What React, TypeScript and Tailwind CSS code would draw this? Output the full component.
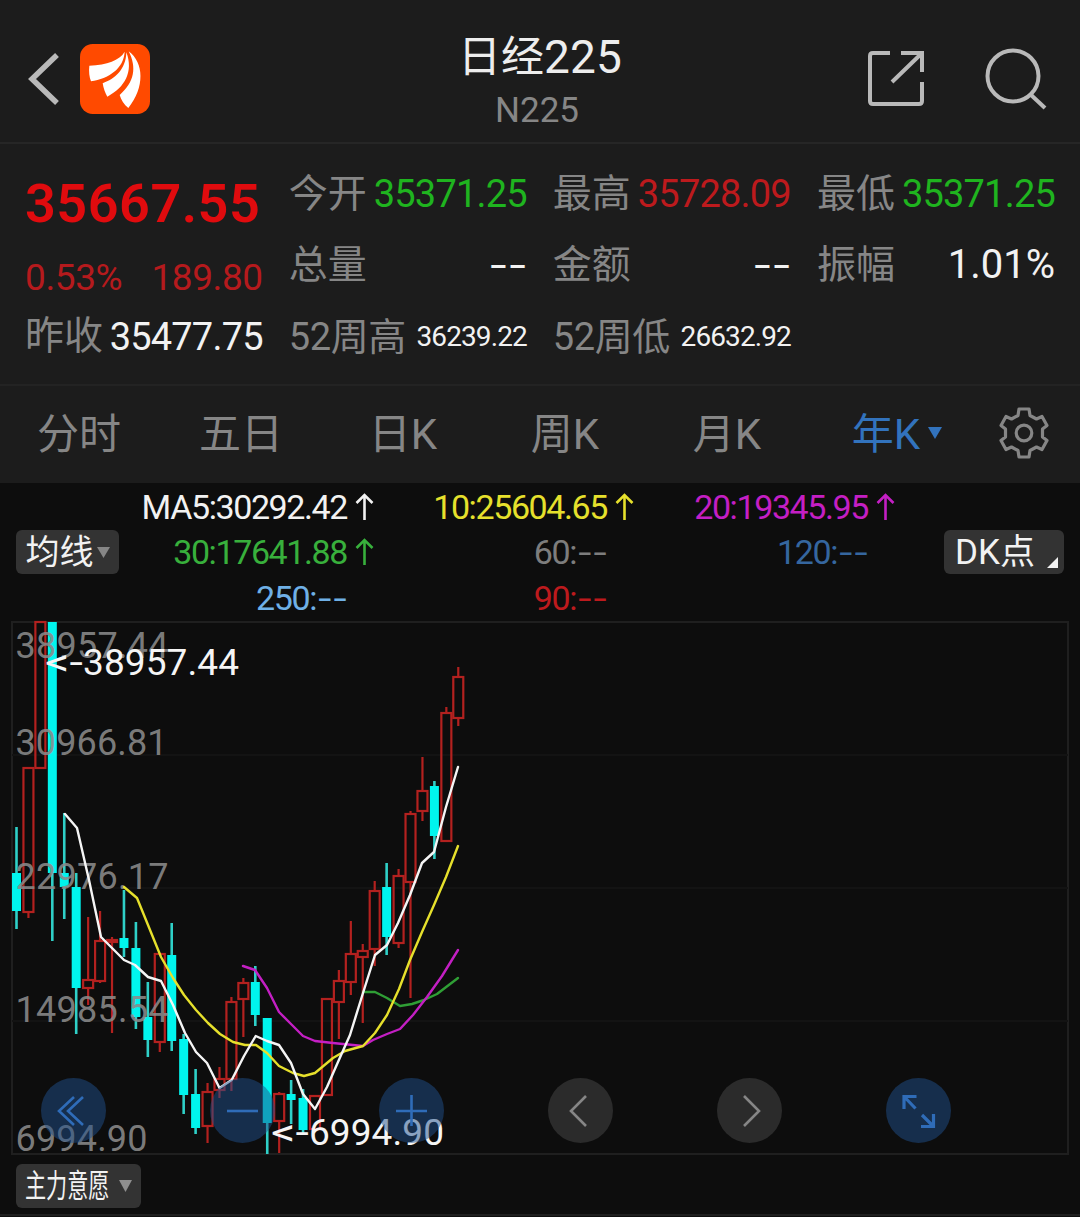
import clsx from "clsx";

type Candle = {
  up: boolean;
  high: number;
  top: number;
  bottom: number;
  low: number;
};

const FIRST_X = 16.5;
const STEP = 11.94;

// [up, high, body top, body bottom, low] in chart pixels, one row per year
const RAW: [number, number, number, number, number][] = [
  [0, 827, 873, 911, 929],
  [1, 768, 768, 912, 918],
  [1, 622, 622, 768, 768],
  [0, 622, 622, 873, 941],
  [0, 813, 873, 887, 919],
  [0, 873, 887, 988, 1034],
  [1, 917, 980, 988, 1005],
  [1, 911, 941, 981, 983],
  [1, 937, 940, 942, 1033],
  [0, 890, 938, 948, 957],
  [0, 922, 948, 1017, 1029],
  [0, 982, 1017, 1040, 1057],
  [1, 953, 954, 1042, 1052],
  [0, 923, 955, 1041, 1051],
  [0, 1034, 1039, 1095, 1114],
  [0, 1069, 1094, 1128, 1134],
  [1, 1083, 1092, 1126, 1143],
  [1, 1067, 1079, 1090, 1098],
  [1, 997, 1002, 1079, 1091],
  [1, 978, 983, 999, 1037],
  [0, 966, 982, 1015, 1026],
  [0, 1018, 1018, 1123, 1154],
  [1, 1092, 1094, 1121, 1153],
  [0, 1080, 1094, 1100, 1124],
  [0, 1089, 1098, 1130, 1134],
  [1, 1096, 1096, 1129, 1129],
  [1, 999, 999, 1095, 1095],
  [1, 970, 981, 1002, 1039],
  [1, 921, 954, 982, 995],
  [1, 944, 951, 957, 1023],
  [1, 881, 891, 949, 966],
  [0, 863, 887, 937, 955],
  [1, 869, 876, 943, 948],
  [1, 811, 814, 882, 998],
  [1, 757, 791, 811, 821],
  [0, 781, 786, 836, 859],
  [1, 707, 713, 841, 841],
  [1, 667, 677, 718, 726],
];

const CANDLES: Candle[] = RAW.map(([up, high, top, bottom, low]) => ({
  up: up === 1,
  high,
  top,
  bottom,
  low,
}));

const MA_LINES = [
  {
    color: "#2f9e35",
    points: "363,992 375,992 387,998 400,1006 412,1004 424,1000 437,994 458,978",
  },
  {
    color: "#c41fc4",
    points:
      "243,966 255,970 267,988 279,1012 292,1025 303,1036 315,1041 333,1043 363,1046 373,1040 387,1034 400,1029 413,1015 427,997 442,976 458,950",
  },
  {
    color: "#e6e02c",
    points:
      "124,887 137,898 148,925 161,957 173,978 184,995 196,1010 208,1023 220,1034 233,1042 245,1045 256,1045 267,1053 279,1066 293,1073 304,1076 315,1073 333,1058 345,1051 363,1046 375,1033 387,1015 399,989 410,960 422,932 434,905 446,877 458,846",
  },
  {
    color: "#f5f5f5",
    points:
      "65,814 77,828 89,880 101,937 113,949 124,960 135,965 148,977 161,981 173,1005 185,1033 196,1052 207,1063 219.5,1088 231.7,1080 244,1056 255.7,1036 267,1041 279,1045 291,1063 303,1094 315,1109 327,1087 338,1062 350,1035 363,993 375,955 387,945 398,923 410,895 422,863 434,852 446,807 458,767",
  },
];

const AXIS = [
  { label: "38957.44", y: 658, width: 153 },
  { label: "30966.81", y: 755, width: 152 },
  { label: "22976.17", y: 889, width: 153 },
  { label: "14985.54", y: 1022, width: 153 },
  { label: "6994.90", y: 1151, width: 132 },
];

const STATS = [
  { label: "今开", value: "35371.25", color: "text-[#1fb41f]" },
  { label: "最高", value: "35728.09", color: "text-[#bd1a1d]" },
  { label: "最低", value: "35371.25", color: "text-[#1fb41f]" },
  { label: "总量", value: "--", color: "text-[#f2f2f2]" },
  { label: "金额", value: "--", color: "text-[#f2f2f2]" },
  { label: "振幅", value: "1.01%", color: "text-[#f2f2f2]" },
  { label: "52周高", value: "36239.22", color: "text-[#f2f2f2]", small: true },
  { label: "52周低", value: "26632.92", color: "text-[#f2f2f2]", small: true },
];

const TABS = ["分时", "五日", "日K", "周K", "月K"];

const LEGEND = [
  { label: "MA5:", value: "30292.42", color: "text-[#f2f2f2]" },
  { label: "10:", value: "25604.65", color: "text-[#e6e02c]" },
  { label: "20:", value: "19345.95", color: "text-[#c41fc4]" },
  { label: "30:", value: "17641.88", color: "text-[#38b03c]" },
  { label: "60:", value: "", color: "text-[#7d7d7d]" },
  { label: "120:", value: "", color: "text-[#35669f]" },
  { label: "250:", value: "", color: "text-[#6fb0e6]" },
  { label: "90:", value: "", color: "text-[#bd1a1d]" },
];

function valueSize(value: string, small?: boolean) {
  if (value === "--") return "-mr-[2px] origin-right scale-x-[1.55] text-[38px] tracking-[2px]";
  if (value.endsWith("%")) return "text-[40px]";
  return small ? "text-[28px] tracking-[-0.9px]" : "text-[38px] tracking-[-0.8px]";
}

function Header() {
  return (
    <header className="flex h-[144px] items-start justify-between border-b-2 border-[#262626] pt-[36px] pr-[33px] pl-[28px]">
      <div className="flex w-[220px] items-center gap-[21px] pt-2">
        <svg className="h-[54px] w-[31px]" viewBox="0 0 31 54" fill="none">
          <path d="M29 3 4 27 29 51" stroke="#b9b9b9" strokeWidth="5.5" />
        </svg>
        <svg className="size-[70px]" viewBox="0 0 210 210">
          <rect width="210" height="210" rx="38" fill="#ff4a00" />
          <g fill="#fff">
            <path d="M134 23C118 50 82 62 28 65c-2 18 0 34 5 47 54-9 98-38 101-89Z" />
            <path d="M139 25c-1 50-34 80-71 93 2 14 8 30 14 40 53-27 79-76 57-133Z" />
            <path d="M146 22c46 34 49 108-1 170-13-10-22-25-26-39 44-38 52-82 27-131Z" />
          </g>
        </svg>
      </div>
      <div className="flex flex-col items-center pl-[5px]">
        <h1 className="flex h-[42px] items-center text-[43px] leading-[42px] text-[#ededed]">
          日经<span className="text-[46px] tracking-[0.2px]">225</span>
        </h1>
        <p className="mt-[12px] pr-[6px] text-[35px] leading-[42px] text-[#868686]">N225</p>
      </div>
      <div className="flex w-[220px] items-start justify-end gap-[60px] pt-[12px]">
        <svg className="h-[60px] w-[58px]" viewBox="0 0 58 60" fill="none" stroke="#b9b9b9" strokeWidth="4">
          <path d="M23 5H6Q3 5 3 8V53Q3 56 6 56H52Q55 56 55 53V34M34 5H55V24M54 6 25 34" />
        </svg>
        <svg className="size-[62px]" viewBox="0 0 62 62" fill="none" stroke="#b9b9b9" strokeWidth="4">
          <circle cx="28" cy="28" r="25.5" />
          <path d="M45 46 60 60" />
        </svg>
      </div>
    </header>
  );
}

function Quote() {
  return (
    <section className="flex h-[240px] gap-[26px] px-[25px] pt-[14px]">
      <div className="flex w-[238px] flex-col">
        <div className="flex h-[92px] items-center text-[54px] leading-none font-semibold tracking-[0.5px] text-[#e00b0e]">
          35667.55
        </div>
        <div className="flex h-[54px] items-center justify-between text-[37px] leading-none tracking-[-0.4px] text-[#b51a1d]">
          <span>0.53%</span>
          <span>189.80</span>
        </div>
        <div className="flex h-[65px] items-center justify-between text-[39px] leading-none">
          <span className="text-[#868686]">昨收</span>
          <span className="text-[38px] tracking-[-0.8px] text-[#f2f2f2]">35477.75</span>
        </div>
      </div>
      <dl className="grid h-[215px] w-[767px] grid-cols-3 grid-rows-3 gap-x-[26px]">
        {STATS.map((stat) => (
          <div key={stat.label} className="flex items-center justify-between leading-none">
            <dt
              className={clsx(
                "whitespace-nowrap text-[#868686]",
                stat.small ? "text-[38px] tracking-[-0.4px]" : "pt-px text-[39px]"
              )}
            >
              {stat.label}
            </dt>
            <dd className={clsx(stat.color, valueSize(stat.value, stat.small))}>{stat.value}</dd>
          </div>
        ))}
      </dl>
    </section>
  );
}

function Tabs() {
  return (
    <nav className="flex h-[99px] items-center border-t-2 border-[#232323] text-[42px] leading-none text-[#868686]">
      {TABS.map((tab) => (
        <button key={tab} type="button" className="w-[162px] pr-[4px] text-center whitespace-nowrap">
          {tab}
        </button>
      ))}
      <button
        type="button"
        className="flex w-[174px] items-center justify-center gap-[8px] whitespace-nowrap text-[#3273bd]"
      >
        年K
        <svg className="mb-[4px] h-[12px] w-[14px]" viewBox="0 0 14 12">
          <path d="M0 0H14L7 12Z" fill="#3273bd" />
        </svg>
      </button>
      <svg
        className="mb-[3px] ml-[15px] h-[52px] w-[50px] shrink-0"
        viewBox="0 0 50 52"
        fill="none"
        stroke="#868686"
        strokeWidth="3.2"
        strokeLinejoin="round"
      >
        <path d="M20 2H30L31 8.500 37.500 12 43 9.500 48 18.500 43.500 22V30L48 33.500 43 42.500 37.500 40 31 43.500 30 50H20L19 43.500 12.500 40 7 42.500 2 33.500 6.500 30V22L2 18.500 7 9.500 12.500 12 19 8.500Z" />
        <circle cx="25" cy="26" r="7.800" />
      </svg>
    </nav>
  );
}

function Legend() {
  return (
    <div className="flex h-[138px] items-start pl-[16px]">
      <button
        type="button"
        className="mt-[47px] flex h-[44px] w-[103px] shrink-0 items-center justify-center gap-[3px] rounded-md bg-[#333333] text-[34px] leading-none text-[#f2f2f2]"
      >
        均线
        <svg className="h-[11px] w-[13px]" viewBox="0 0 13 11">
          <path d="M0 0H13L6.500 11Z" fill="#868686" />
        </svg>
      </button>
      <ul className="grid w-[778px] shrink-0 grid-cols-[256px_260px_261px] pt-px">
        {LEGEND.map((item) => (
          <li
            key={item.label}
            className={clsx(
              "flex h-[45.5px] items-center justify-end text-[34px] leading-none tracking-[-1.4px]",
              item.color
            )}
          >
            {item.label}
            {item.value ? (
              <>
                {item.value}
                <span className="flex w-[28px] justify-end pr-px">
                  <svg
                    className="h-[28px] w-[19px]"
                    viewBox="0 0 19 28"
                    fill="none"
                    stroke="currentColor"
                    strokeWidth="2.6"
                  >
                    <path d="M9.500 27V2M1.500 10 9.500 2 17.500 10" />
                  </svg>
                </span>
              </>
            ) : (
              <span className="mr-[26px] flex w-[33px] justify-end">
                <span className="origin-right scale-x-[1.4] tracking-[1.500px]">--</span>
              </span>
            )}
          </li>
        ))}
      </ul>
      <button
        type="button"
        className="mt-[47px] ml-[47px] flex h-[44px] w-[120px] shrink-0 items-center justify-between rounded-md bg-[#333333] pr-[6px] pl-[11px] text-[35px] leading-none whitespace-nowrap text-[#f2f2f2]"
      >
        DK点
        <svg className="mt-[20px] size-[11px]" viewBox="0 0 11 11">
          <path d="M11 0V11H0Z" fill="#f2f2f2" />
        </svg>
      </button>
    </div>
  );
}

function Chart() {
  return (
    <svg className="block h-[537px] w-[1080px] overflow-visible" viewBox="0 621 1080 537" fill="none">
      <g stroke="#1f1f1f" strokeWidth="2">
        <path d="M12 622H1068V1154H12Z" />
        <path d="M12 755H1068M12 888H1068M12 1021H1068" stroke="#131313" />
      </g>
      {CANDLES.map((c, i) => {
        const x = FIRST_X + i * STEP;
        return c.up ? (
          <g key={i} stroke="#b3211f" strokeWidth="2.2">
            <path d={`M${x} ${c.high}V${c.top}M${x} ${c.bottom}V${c.low}`} />
            <rect x={x - 5} y={c.top} width="10" height={c.bottom - c.top} />
          </g>
        ) : (
          <g key={i}>
            <path d={`M${x} ${c.high}V${c.low}`} stroke="#2fd0c8" strokeWidth="2.6" />
            <rect x={x - 4.5} y={c.top} width="9" height={c.bottom - c.top} fill="#00f5ee" />
          </g>
        );
      })}
      <g fontSize="36" fill="#8a8a8a" fillOpacity="0.9">
        {AXIS.map((a) => (
          <text key={a.label} x="15.5" y={a.y} textLength={a.width}>
            {a.label}
          </text>
        ))}
      </g>
      {MA_LINES.map((line) => (
        <polyline
          key={line.color}
          points={line.points}
          stroke={line.color}
          strokeWidth="2.4"
          strokeLinejoin="round"
          strokeLinecap="round"
        />
      ))}
      <g fontSize="37" fill="#f5f5f5">
        <text x="45" y="675" textLength="38" lengthAdjust="spacingAndGlyphs">
          &lt;-
        </text>
        <text x="83" y="675" textLength="156">
          38957.44
        </text>
        <text x="271" y="1145" textLength="38" lengthAdjust="spacingAndGlyphs">
          &lt;-
        </text>
        <text x="309" y="1145" textLength="135">
          6994.90
        </text>
      </g>
    </svg>
  );
}

const CONTROLS = [
  { name: "first", blue: true, path: "M33 19 18 33 33 47M42 19 27 33 42 47" },
  { name: "minus", blue: true, path: "M17 33H48" },
  { name: "plus", blue: true, path: "M17 33H48M32.500 17V48" },
  { name: "prev", blue: false, path: "M38 18 23 33 38 48" },
  { name: "next", blue: false, path: "M27 18 42 33 27 48" },
  { name: "expand", blue: true, path: "M18 31V18.500H30.500M18 18.500 29.500 30.500M47.500 36V48.500H35M47.500 48.500 36 37" },
];

function Controls() {
  return (
    <div className="absolute top-[457px] left-[41px] flex gap-[104px]">
      {CONTROLS.map((c) => (
        <button
          key={c.name}
          type="button"
          aria-label={c.name}
          className={clsx("size-[65px] rounded-full", c.blue ? "bg-[#1f4f8c]/50" : "bg-[#2b2b2b]")}
        >
          <svg
            className="size-[65px]"
            viewBox="0 0 65 65"
            fill="none"
            stroke={c.blue ? "#2f6cb8" : "#868686"}
            strokeWidth={c.name === "expand" ? 3.2 : 2.6}
          >
            <path d={c.path} />
          </svg>
        </button>
      ))}
    </div>
  );
}

export default function App() {
  return (
    <div className="flex h-[1217px] w-[1080px] flex-col overflow-hidden bg-[#0d0d0d] font-[Roboto,'Noto_Sans_CJK_SC',sans-serif]">
      <div className="bg-[#1c1c1c]">
        <Header />
        <Quote />
        <Tabs />
      </div>
      <Legend />
      <div className="relative">
        <Chart />
        <Controls />
      </div>
      <div className="flex h-[58px] shrink-0 flex-col border-b-2 border-[#1f1f1f] pt-[6px] pl-[16px]">
        <button
          type="button"
          className="flex h-[44px] w-[125px] shrink-0 items-center justify-between rounded-md bg-[#333333] pr-[9px] pl-[9px] text-[32px] leading-none text-[#f2f2f2]"
        >
          <span className="w-[84px]">
            <span className="block w-[128px] origin-left scale-x-[0.66] text-left whitespace-nowrap">主力意愿</span>
          </span>
          <svg className="h-[12px] w-[13px]" viewBox="0 0 13 12">
            <path d="M0 0H13L6.500 12Z" fill="#8f8f8f" />
          </svg>
        </button>
      </div>
    </div>
  );
}
